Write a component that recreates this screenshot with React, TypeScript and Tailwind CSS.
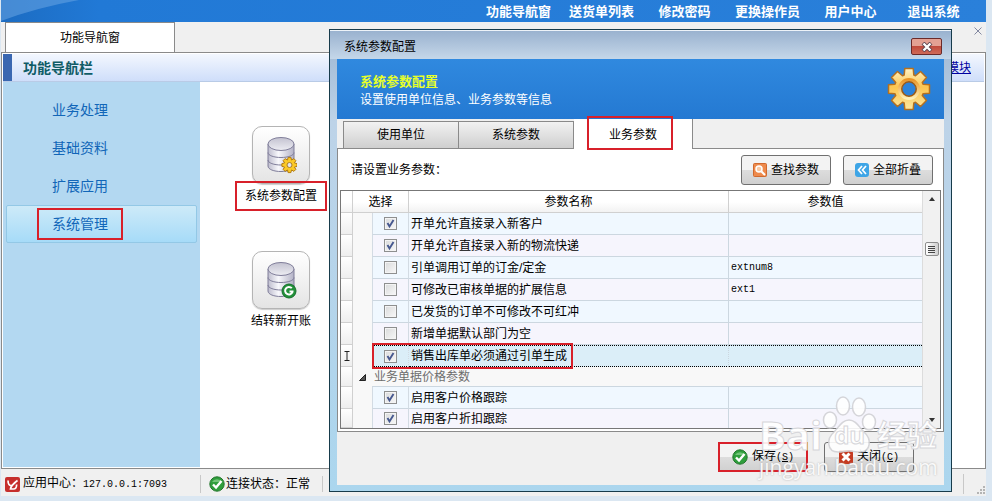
import React from "react";

type Param = {
  name: string;
  checked: boolean;
  value?: string;
  active?: boolean;
};

const NAV = ["功能导航窗", "送货单列表", "修改密码", "更换操作员", "用户中心", "退出系统"];

const SIDEBAR = ["业务处理", "基础资料", "扩展应用", "系统管理"];

const PARAMS: Param[] = [
  { name: "开单允许直接录入新客户", checked: true },
  { name: "开单允许直接录入新的物流快递", checked: true },
  { name: "引单调用订单的订金/定金", checked: false, value: "extnum8" },
  { name: "可修改已审核单据的扩展信息", checked: false, value: "ext1" },
  { name: "已发货的订单不可修改不可红冲", checked: false },
  { name: "新增单据默认部门为空", checked: false },
  { name: "销售出库单必须通过引单生成", checked: true, active: true },
];

const PRICE_PARAMS: Param[] = [
  { name: "启用客户价格跟踪", checked: true },
  { name: "启用客户折扣跟踪", checked: true },
];

// eight-toothed gear outline centred on 0,0
function gearPath(inner: number, outer: number, half: number) {
  const points: string[] = [];
  for (let i = 0; i < 8; i++) {
    const a = (i * Math.PI) / 4;
    for (const [x, y] of [
      [-half - 0.6, -inner],
      [-half, -outer],
      [half, -outer],
      [half + 0.6, -inner],
    ]) {
      const px = x * Math.cos(a) - y * Math.sin(a);
      const py = x * Math.sin(a) + y * Math.cos(a);
      points.push(`${px.toFixed(2)} ${py.toFixed(2)}`);
    }
  }
  return `M${points.join("L")}Z`;
}

function Highlight({ className }: { className: string }) {
  return (
    <span
      className={`pointer-events-none absolute z-10 border-2 border-[#d8202a] ${className}`}
    />
  );
}

function Database({ children }: { children: React.ReactNode }) {
  return (
    <svg viewBox="0 0 32 40" className="h-10 w-8">
      <defs>
        <linearGradient id="cyl" x1="0" x2="1" y1="0" y2="0">
          <stop offset="0" stopColor="#bdbccd" />
          <stop offset="0.4" stopColor="#f8f8fc" />
          <stop offset="1" stopColor="#b3b2c6" />
        </linearGradient>
        <linearGradient id="lid" x1="0" x2="0" y1="0" y2="1">
          <stop offset="0" stopColor="#c3c2d0" />
          <stop offset="1" stopColor="#ededf3" />
        </linearGradient>
      </defs>
      <path
        d="M3 9v22c0 3.500 6 5.500 13 5.500S29 34.500 29 31V9z"
        fill="url(#cyl)"
        stroke="#807e9a"
      />
      <path
        d="M3 17.500c0 3 6 5 13 5s13-2 13-5M3 25c0 3 6 5 13 5s13-2 13-5"
        fill="none"
        stroke="#807e9a"
      />
      <ellipse cx="16" cy="9" rx="13" ry="6.500" fill="url(#lid)" stroke="#807e9a" />
      {children}
    </svg>
  );
}

function BigGear() {
  return (
    <svg viewBox="-23 -23 46 46" className="size-[46px]">
      <defs>
        <linearGradient id="gold" x1="0" x2="0" y1="0" y2="1">
          <stop offset="0" stopColor="#fff3c4" />
          <stop offset="0.45" stopColor="#fbc550" />
          <stop offset="0.75" stopColor="#fdd77a" />
          <stop offset="1" stopColor="#ffe9a0" />
        </linearGradient>
        <linearGradient id="ring" x1="0" x2="0" y1="0" y2="1">
          <stop offset="0" stopColor="#ea9426" />
          <stop offset="1" stopColor="#fff0b8" />
        </linearGradient>
      </defs>
      <path
        d={gearPath(14, 20.5, 4.2)}
        fill="url(#gold)"
        stroke="#b5701f"
        strokeWidth="1.500"
        strokeLinejoin="round"
      />
      <circle r="9.500" fill="none" stroke="url(#ring)" strokeWidth="3" />
      <circle r="7.200" fill="#2d83da" stroke="#9c5a18" strokeWidth="1.500" />
    </svg>
  );
}

function CheckBall() {
  return (
    <svg viewBox="0 0 16 16" className="size-4 shrink-0">
      <circle cx="8" cy="8" r="7.200" fill="#2f9e3c" stroke="#24762d" />
      <path d="M3 6a5.500 4.500 0 0 1 10 0z" fill="#8fd491" opacity=".7" />
      <path d="M4 8.500l3 3 5.500-6.500" fill="none" stroke="#fff" strokeWidth="2.400" />
    </svg>
  );
}

function GridRow({ param, index, last }: { param: Param; index: number; last?: boolean }) {
  const { name, checked, value, active } = param;
  const bg = active ? "bg-[#dbeef8]" : index % 2 ? "bg-[#f6f5fd]" : "bg-[#f0f8ff]";
  const line = last
    ? ""
    : active
      ? "border-y border-dotted border-y-black"
      : "border-b border-[#ccd7e0]";
  return (
    <tr className={last ? "h-[19px]" : "h-[22px]"}>
      <td className="border-r border-b border-[#d0d0d0] bg-gradient-to-b from-white to-[#eeeeee] text-center">
        {active && (
          <svg viewBox="0 0 6 10" className="mx-auto h-[10px] w-[6px]">
            <path d="M0.500 0.500h5M0.500 9.500h5M3 0.500v9" stroke="#222" fill="none" />
          </svg>
        )}
      </td>
      <td className="bg-[#f8f8f8]" />
      <td className={`relative border-x border-x-[#d3dbe3] ${bg} ${line}`}>
        {active && <Highlight className="-top-[3px] -left-px h-[26px] w-[201px]" />}
        <input
          type="checkbox"
          defaultChecked={checked}
          aria-label={name}
          className="peer mx-auto block size-[13px] appearance-none border border-[#8e8f8f] bg-gradient-to-br from-[#d9dadb] to-[#f8f8f8] outline outline-1 -outline-offset-2 outline-[#f4f4f4]"
        />
        <svg
          viewBox="0 0 13 13"
          className="pointer-events-none absolute inset-0 m-auto hidden size-[13px] peer-checked:block"
        >
          <path d="M3.500 6l2 3.500 4-6.500" fill="none" stroke="#46588f" strokeWidth="1.900" />
        </svg>
      </td>
      <td className={`border-r border-r-[#ccd7e0] pl-[2px] ${bg} ${line}`}>{name}</td>
      <td
        className={`pl-[2px] font-['Liberation_Mono',monospace] text-[10px] ${bg} ${line}`}
      >
        {value}
      </td>
    </tr>
  );
}

function ParamTable() {
  return (
    <table className="w-full min-w-0 flex-1 table-fixed border-separate border-spacing-0 text-left">
      <colgroup>
        <col className="w-3" />
        <col className="w-[19px]" />
        <col className="w-[37px]" />
        <col />
        <col className="w-[193px]" />
      </colgroup>
      <thead>
        <tr className="h-[22px] bg-gradient-to-b from-white from-50% to-[#f1f1f1] text-center">
          <th className="border-r border-b border-[#d0d0d0]" />
          <th colSpan={2} className="border-r border-b border-[#d0d0d0] font-normal">
            选择
          </th>
          <th className="border-r border-b border-[#d0d0d0] font-normal">参数名称</th>
          <th className="border-b border-[#d0d0d0] font-normal">参数值</th>
        </tr>
      </thead>
      <tbody>
        {PARAMS.map((p, i) => (
          <GridRow key={p.name} param={p} index={i} />
        ))}
        <tr className="h-5 text-[#6d6d6d]">
          <td className="border-r border-b border-[#d0d0d0] bg-gradient-to-b from-white to-[#eeeeee]" />
          <td className="bg-[#f8f8f8]">
            <svg viewBox="0 0 7 7" className="mx-auto size-[7px]">
              <path d="M6.500 0.500v6h-6z" fill="#555" stroke="#222" />
            </svg>
          </td>
          <td colSpan={3} className="border-b border-[#ccd7e0] bg-[#f8f8f8] pl-[2px]">
            业务单据价格参数
          </td>
        </tr>
        {PRICE_PARAMS.map((p, i) => (
          <GridRow
            key={p.name}
            param={p}
            index={i}
            last={i === PRICE_PARAMS.length - 1}
          />
        ))}
      </tbody>
    </table>
  );
}

function Scrollbar() {
  return (
    <div className="flex w-[18px] shrink-0 flex-col items-center border-l border-[#dcdcdc] bg-[#f1f1f1]">
      <button aria-label="向上滚动" className="flex h-4 w-full items-center justify-center">
        <svg viewBox="0 0 6 4" className="h-1 w-[6px]">
          <path d="M0 4l3-4 3 4z" fill="#333" />
        </svg>
      </button>
      <div className="w-full flex-1 pt-[35px]">
        <div className="mx-auto flex size-[14px] flex-col items-center justify-center gap-px rounded-[2px] border border-[#8c8c8c] bg-gradient-to-r from-white to-[#cfcfcf]">
          <span className="h-px w-[7px] bg-[#444]" />
          <span className="h-px w-[7px] bg-[#444]" />
          <span className="h-px w-[7px] bg-[#444]" />
          <span className="h-px w-[7px] bg-[#444]" />
        </div>
      </div>
      <button aria-label="向下滚动" className="flex h-4 w-full items-center justify-center">
        <svg viewBox="0 0 6 4" className="h-1 w-[6px]">
          <path d="M0 0l3 4 3-4z" fill="#333" />
        </svg>
      </button>
    </div>
  );
}

const BUTTON =
  "flex h-[30px] w-[90px] items-center justify-center gap-1 rounded-[3px] border border-[#707070] bg-gradient-to-b from-[#f3f3f3] from-50% via-[#dddddd] via-50% to-[#d0d0d0] whitespace-nowrap";

function Watermark() {
  return (
    <div className="pointer-events-none absolute right-[14px] bottom-[10px] z-20 w-[178px] font-['Open_Sans','Noto_Sans_CJK_SC',sans-serif] text-white/90">
      <div className="flex items-center justify-between text-[40px] leading-9 font-bold [-webkit-text-stroke:1px_#d6d6da]">
        <span>Bai</span>
        <span className="relative flex h-9 w-[52px] items-center justify-center">
          <svg viewBox="0 0 56 58" className="absolute -top-[21px] -left-[2px] h-[58px] w-14">
            <g fill="#fff" stroke="#d2d2d6" strokeWidth="1.500" opacity=".9">
              <ellipse cx="8" cy="24" rx="6.500" ry="8" />
              <ellipse cx="21" cy="10" rx="6.500" ry="9" />
              <ellipse cx="37" cy="11" rx="6.500" ry="9" />
              <ellipse cx="47" cy="26" rx="6.500" ry="8" />
              <path d="M27 24c-7 0-10 7-15 12-8 7-7 20 4 20 5 0 7-1 11-1s6 1 11 1c11 0 12-13 4-20-5-5-8-12-15-12z" />
            </g>
          </svg>
          <span className="relative text-[24px]">du</span>
        </span>
        <span className="text-[30px]">经验</span>
      </div>
      <div className="text-[21px] leading-7 [text-shadow:0_0_2px_#aaa]">jingyan.baidu.com</div>
    </div>
  );
}

function SettingsDialog() {
  return (
    <section
      role="dialog"
      aria-label="系统参数配置"
      className="absolute top-[29px] right-10 left-[329px] border border-[#173b4b] bg-gradient-to-b from-[#9db5d1] via-[#bdd3e8] via-20% to-[#abd6ee] px-[7px] pb-[6px]"
    >
      <div className="-mx-[7px] flex h-[29px] items-center justify-between border-t border-white/70 bg-gradient-to-b from-[#9ab2cf] to-[#c5d7e9] pt-[3px] pr-[9px] pl-[14px]">
        <h1>系统参数配置</h1>
        <button
          aria-label="关闭窗口"
          className="flex h-[17px] w-[31px] items-center justify-center rounded-[2px] border border-[#6a2a2a] bg-gradient-to-b from-[#e3a093] from-45% via-[#c04a3c] via-50% to-[#cf6a58]"
        >
          <svg viewBox="0 0 12 10" className="h-[10px] w-3">
            <path d="M2 1l8 8M10 1L2 9" stroke="#5d4550" strokeWidth="4" />
            <path d="M2.500 1.500l7 7M9.500 1.500l-7 7" stroke="#fff" strokeWidth="2.400" />
          </svg>
        </button>
      </div>

      <header className="flex h-[60px] items-center justify-between bg-gradient-to-b from-[#3089df] to-[#2479d2] pr-3 pl-[23px]">
        <div className="pt-[3px] leading-[19px] text-white">
          <h2 className="text-[13px] font-bold text-[#e6ff2a]">系统参数配置</h2>
          <p>设置使用单位信息、业务参数等信息</p>
        </div>
        <BigGear />
      </header>

      <div className="bg-[#f0f0f0]">
        <div role="tablist" className="relative flex h-[30px] items-end pl-[6px]">
          <span className="absolute inset-x-0 bottom-0 h-px bg-[#8a8a8a]" />
          <button
            role="tab"
            aria-selected="false"
            className="relative h-7 w-[116px] border border-[#8a8a8a] bg-gradient-to-b from-[#f2f2f2] to-[#cfcfcf]"
          >
            使用单位
          </button>
          <button
            role="tab"
            aria-selected="false"
            className="relative h-7 w-[115px] border border-l-0 border-[#8a8a8a] bg-gradient-to-b from-[#f2f2f2] to-[#cfcfcf]"
          >
            系统参数
          </button>
          <button
            role="tab"
            aria-selected="true"
            className="relative h-[30px] w-[119px] border-r border-[#8a8a8a] bg-white pt-[2px]"
          >
            <Highlight className="-top-[3px] left-[13px] h-[34px] w-[86px]" />
            业务参数
          </button>
        </div>

        <div className="border border-t-0 border-[#8a8a8a] bg-white px-[2px] pb-[2px]">
          <div className="flex h-[41px] items-center gap-3 pr-2 pl-[11px]">
            <p className="flex-1">请设置业务参数：</p>
            <button className={BUTTON}>
              <svg viewBox="0 0 14 14" className="size-[14px]">
                <rect x=".5" y=".5" width="13" height="13" rx="1" fill="#ee8a4c" stroke="#d0692e" />
                <circle cx="6" cy="6" r="3" fill="#f9c9a4" stroke="#fff" strokeWidth="1.500" />
                <path d="M8.500 8.500L12 12" stroke="#fff" strokeWidth="2" />
              </svg>
              查找参数
            </button>
            <button className={BUTTON}>
              <svg viewBox="0 0 14 14" className="size-[14px]">
                <rect width="14" height="14" rx="3" fill="#3ea5e6" />
                <path d="M7 3L3.500 7 7 11M11 3L7.500 7l3.500 4" stroke="#fff" strokeWidth="1.700" fill="none" />
              </svg>
              全部折叠
            </button>
          </div>
          <div className="flex border border-[#777] bg-white">
            <ParamTable />
            <Scrollbar />
          </div>
        </div>

        <div className="flex h-[53px] items-start justify-end gap-4 pt-[10px] pr-[30px]">
          <button className={`relative ${BUTTON}`}>
            <Highlight className="-inset-px" />
            <CheckBall />
            <span>
              保存<span className="font-['Liberation_Mono',monospace] text-[10px]">(<u>S</u>)</span>
            </span>
          </button>
          <button className={BUTTON}>
            <svg viewBox="0 0 14 14" className="size-[14px]">
              <rect width="14" height="14" rx="1" fill="#c53a20" />
              <path d="M3.500 3.500l7 7M10.500 3.500l-7 7" stroke="#fff" strokeWidth="3" />
            </svg>
            <span>
              关闭<span className="font-['Liberation_Mono',monospace] text-[10px]">(<u>C</u>)</span>
            </span>
          </button>
        </div>
      </div>
      <Watermark />
    </section>
  );
}

function Launcher({ label, marked, children }: { label: string; marked?: boolean; children: React.ReactNode }) {
  return (
    <button className="flex w-[90px] flex-col items-center gap-1">
      <span className="flex size-[58px] items-center justify-center rounded-[10px] border border-[#b4b4b4] bg-gradient-to-b from-white to-[#e4e4e4] shadow-[0_1px_1px_#ccc]">
        {children}
      </span>
      <span className="relative leading-4">
        {marked && <Highlight className="-inset-x-[10px] -inset-y-[7px]" />}
        {label}
      </span>
    </button>
  );
}

export default function App() {
  return (
    <div className="relative flex min-h-screen flex-col bg-[#dbe7f2] pr-[6px] pb-[5px] pl-px font-['Liberation_Sans','Noto_Sans_CJK_SC',sans-serif] text-[12px] leading-4 text-black">
      <nav className="relative flex h-[22px] justify-end bg-gradient-to-r from-[#1c6cc2] via-[#2179d6] via-10% to-[#2a80da] pt-px pr-[11px] text-[13px] font-bold text-white">
        <svg
          viewBox="0 0 80 22"
          preserveAspectRatio="none"
          className="pointer-events-none absolute top-0 left-0 h-full w-20"
        >
          <path d="M0 0h78Q34 8 0 21z" fill="#6fa9e6" opacity=".5" />
        </svg>
        {NAV.map((item) => (
          <button key={item} className="w-[83px]">
            {item}
          </button>
        ))}
      </nav>

      <div className="flex h-[30px] items-stretch justify-between bg-[#f0f0f0] pl-1">
        <button className="w-[170px] border border-b-0 border-[#8a8a8a] bg-white">功能导航窗</button>
        <button aria-label="关闭标签页" className="flex w-4 justify-center pt-[5px]">
          <svg viewBox="0 0 8 8" className="size-2">
            <path d="M0.500 0.500l7 7M7.500 0.500l-7 7" stroke="#8388a0" />
          </svg>
        </button>
      </div>

      <main className="flex flex-1 flex-col border border-[#8a8a8a] bg-white p-px">
        <div className="flex h-7 items-center justify-between border-b border-[#b9cbe6] bg-gradient-to-b from-[#f3f7fe] to-[#cfdefa]">
          <h1 className="flex h-full items-center border-l-[9px] border-[#3a67b1] pl-[11px] text-[14px] font-bold text-[#0f5c66]">
            功能导航栏
          </h1>
          <a href="#modules" className="pr-[13px] text-[#0000a0] underline">
            模块
          </a>
        </div>
        <div className="flex flex-1">
          <aside className="w-[197px] bg-[#b3d8f1] px-[3px] pt-[9px] text-[14px] text-[#1166b8]">
            {SIDEBAR.map((item) => {
              const selected = item === "系统管理";
              return (
                <button
                  key={item}
                  className={`flex h-[38px] w-full items-center rounded-[2px] border pl-[45px] ${
                    selected
                      ? "border-[#93c8e6] bg-gradient-to-b from-[#cdeaf8] to-[#a6dbf8]"
                      : "border-transparent"
                  }`}
                >
                  <span className="relative">
                    {item}
                    {selected && <Highlight className="-inset-x-[15px] -inset-y-[8px]" />}
                  </span>
                </button>
              );
            })}
          </aside>
          <div className="flex flex-col gap-[47px] pt-11 pl-9">
            <Launcher label="系统参数配置" marked>
              <Database>
                <g transform="translate(24.500 30)">
                  <path
                    d={gearPath(5, 7.6, 1.4)}
                    fill="#fbc926"
                    stroke="#b37b10"
                    strokeLinejoin="round"
                  />
                  <circle r="2.500" fill="#e4e4ec" stroke="#a87d28" />
                </g>
              </Database>
            </Launcher>
            <Launcher label="结转新开账">
              <Database>
                <circle cx="24" cy="31" r="7" fill="#23903a" stroke="#15702a" />
                <path
                  d="M26.800 28.200A3.800 3.800 0 1 0 27.500 32V31.500H24.500"
                  fill="none"
                  stroke="#fff"
                  strokeWidth="2"
                />
              </Database>
            </Launcher>
          </div>
        </div>
      </main>

      <footer className="flex h-[27px] items-center bg-[#f0f0f0] pt-[3px] pl-1">
        <div className="flex w-[196px] items-center gap-[3px] border-r border-[#c8c8c8]">
          <svg viewBox="0 0 15 15" className="size-[15px]">
            <rect width="15" height="15" rx="2" fill="#c62f2c" />
            <path
              d="M3 3.500C3 7 4.500 9 6.500 8.500S10 5 12.500 3.500C9 6 6 9 5.500 12h3c2 0 3.500-2 3-4.500"
              fill="none"
              stroke="#fff"
              strokeWidth="1.700"
            />
          </svg>
          <span>
            应用中心：
            <span className="font-['Liberation_Mono',monospace] text-[10px]">127.0.0.1:7093</span>
          </span>
        </div>
        <div className="flex flex-1 items-center gap-px pl-2">
          <CheckBall />
          <span className="border-r border-[#c8c8c8] pr-3">连接状态：正常</span>
        </div>
        <div className="flex h-5 items-end border-l border-[#c8c8c8] pr-px pl-[13px]">
          <svg viewBox="0 0 8 8" className="size-2">
            <path
              d="M6 0h2v2H6zM3 3h2v2H3zM6 3h2v2H6zM0 6h2v2H0zM3 6h2v2H3zM6 6h2v2H6z"
              fill="#b4b4b4"
            />
          </svg>
        </div>
      </footer>

      <SettingsDialog />
    </div>
  );
}
